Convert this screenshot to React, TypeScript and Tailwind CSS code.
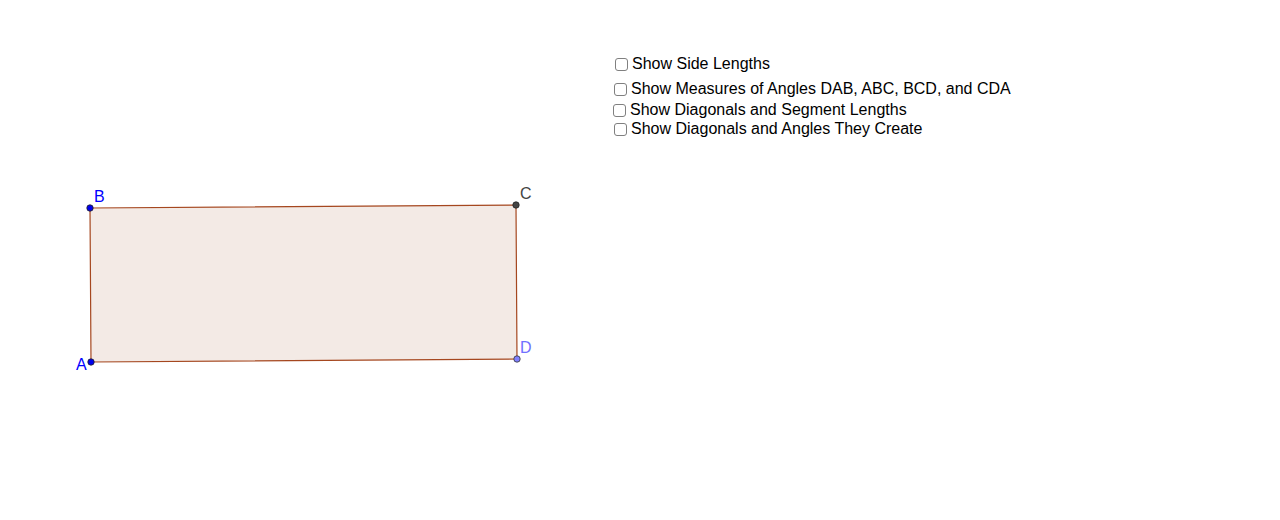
import React from "react";

const options = [
  { label: "Show Side Lengths", className: "ml-[615px] mt-[55px]" },
  { label: "Show Measures of Angles DAB, ABC, BCD, and CDA", className: "ml-[614px] mt-[7px]" },
  { label: "Show Diagonals and Segment Lengths", className: "ml-[613px] mt-[3px]" },
  { label: "Show Diagonals and Angles They Create", className: "ml-[614px] mt-[1px]" },
];

const Quad: React.FC = () => (
  <svg className="absolute inset-0" width="1280" height="520" viewBox="0 0 1280 520">
    <polygon
      points="91,362 90,208 516,205 517,359"
      fill="#f3eae5"
      stroke="#a5471f"
      strokeWidth="1.2"
    />
    <circle cx="90" cy="208" r="3.2" fill="#0000ee" stroke="#222" strokeWidth="0.8" />
    <circle cx="516" cy="205" r="3.2" fill="#444" stroke="#222" strokeWidth="0.8" />
    <circle cx="91" cy="362" r="3.2" fill="#0000ee" stroke="#222" strokeWidth="0.8" />
    <circle cx="517" cy="359" r="3.2" fill="#8080ff" stroke="#333" strokeWidth="0.8" />
    <g fontFamily="'Liberation Sans', Arial, sans-serif" fontSize="16">
      <text x="94" y="202" fill="#0000ff">B</text>
      <text x="520" y="199" fill="#444444">C</text>
      <text x="76" y="370" fill="#0000ff">A</text>
      <text x="520" y="353" fill="#7070ff">D</text>
    </g>
  </svg>
);

export default function App() {
  return (
    <div className="relative w-[1280px] h-[520px] bg-white overflow-hidden font-['Liberation_Sans',Arial,sans-serif]">
      <Quad />
      <div className="relative flex flex-col items-start">
        {options.map((opt) => (
          <label
            key={opt.label}
            className={`flex items-center h-[18px] text-[16px] leading-[18px] text-black ${opt.className}`}
          >
            <span className="w-[13px] h-[13px] border border-[#808080] rounded-[3px] bg-white mr-[4px] shrink-0" />
            {opt.label}
          </label>
        ))}
      </div>
    </div>
  );
}
